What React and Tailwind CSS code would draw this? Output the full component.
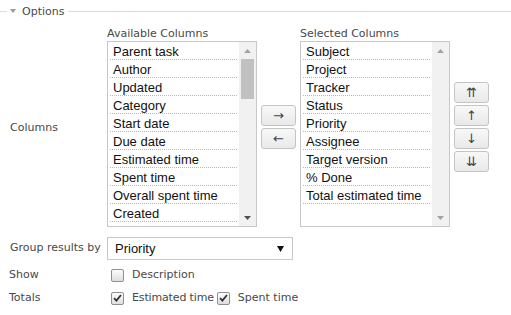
import React from "react";

const available = [
  "Parent task",
  "Author",
  "Updated",
  "Category",
  "Start date",
  "Due date",
  "Estimated time",
  "Spent time",
  "Overall spent time",
  "Created",
];
const selected = [
  "Subject",
  "Project",
  "Tracker",
  "Status",
  "Priority",
  "Assignee",
  "Target version",
  "% Done",
  "Total estimated time",
];

function Tri({ down, color }) {
  return (
    <svg width="7" height="4" viewBox="0 0 7 4">
      {down ? (
        <polygon points="0,0 7,0 3.5,4" fill={color} />
      ) : (
        <polygon points="0,4 7,4 3.5,0" fill={color} />
      )}
    </svg>
  );
}

function ListBox({ items, scroll }) {
  return (
    <div className="flex h-[186px] w-[150px] overflow-hidden border border-[#c8c8c8] bg-white">
      <div className="flex-1 overflow-hidden pl-[2px] pr-[2px]">
        {items.map((t) => (
          <div
            key={t}
            className="h-[18px] shrink-0 border-b border-dotted border-[#b8b8b8] pl-[3px] pt-[2px] text-[13px] leading-[15px] text-[#111] whitespace-nowrap"
            style={{ fontFamily: '"Liberation Sans", Arial, sans-serif' }}
          >
            {t}
          </div>
        ))}
      </div>
      <div className="flex w-[17px] flex-col bg-[#f1f1f1]">
        <div className="flex h-[17px] items-center justify-center">
          <Tri color="#a3a3a3" />
        </div>
        <div className="flex-1">
          {scroll && <div className="mx-[2px] h-[40px] bg-[#c1c1c1]" />}
        </div>
        <div className="flex h-[17px] items-center justify-center">
          <Tri down color={scroll ? "#505050" : "#a3a3a3"} />
        </div>
      </div>
    </div>
  );
}

function Btn({ children }) {
  return (
    <div className="flex h-[21px] w-[35px] items-center justify-center rounded-[3px] border border-[#c4c4c4] bg-gradient-to-b from-[#f8f8f8] to-[#e9e9e9] text-[13px] leading-none text-[#444]">
      {children}
    </div>
  );
}

function Check({ checked, ml = "ml-[4px]" }) {
  return (
    <div
      className={
        ml +
        " mr-[8px] flex h-[13px] w-[13px] shrink-0 items-center justify-center rounded-[2px] border border-[#8f8f8f] bg-gradient-to-b from-[#fcfcfc] to-[#dedede]"
      }
    >
      {checked && (
        <svg width="9" height="8" viewBox="0 0 9 8">
          <path d="M1 4.2 L3.4 6.6 L8 1" fill="none" stroke="#333" strokeWidth="1.8" />
        </svg>
      )}
    </div>
  );
}

export default function App() {
  return (
    <div
      className="flex h-[315px] w-[511px] flex-col overflow-hidden bg-white text-[11px] text-[#484848]"
      style={{ fontFamily: '"DejaVu Sans", Verdana, sans-serif' }}
    >
      {/* legend */}
      <div className="flex h-[22px] items-center">
        <div className="h-px w-[7px] bg-[#dcdcdc]" />
        <div className="ml-[3px] flex w-[6px] items-center">
          <svg width="6" height="4" viewBox="0 0 6 4">
            <polygon points="0,0 6,0 3,4" fill="#9a9a9a" />
          </svg>
        </div>
        <span className="ml-[6px] leading-none">Options</span>
        <div className="ml-[4px] h-px flex-1 bg-[#dcdcdc]" />
      </div>

      {/* columns */}
      <div className="mt-[5px] flex items-center">
        <div className="w-[107px] pl-[10px] pt-[3px]">Columns</div>
        <div className="flex items-center">
          <div className="flex flex-col">
            <div className="h-[14px] leading-[14px]">Available Columns</div>
            <ListBox items={available} scroll />
          </div>
          <div className="ml-[4px] flex flex-col gap-[2px]">
            <Btn>→</Btn>
            <Btn>←</Btn>
          </div>
          <div className="ml-[4px] flex flex-col">
            <div className="h-[14px] leading-[14px]">Selected Columns</div>
            <ListBox items={selected} />
          </div>
          <div className="ml-[4px] flex flex-col gap-[2px]">
            <Btn>⇈</Btn>
            <Btn>↑</Btn>
            <Btn>↓</Btn>
            <Btn>⇊</Btn>
          </div>
        </div>
      </div>

      {/* group */}
      <div className="mt-[10px] flex items-center">
        <div className="w-[107px] pl-[10px]">Group results by</div>
        <div
          className="flex h-[23px] w-[186px] items-center justify-between border border-[#c8c8c8] bg-white pl-[7px] pr-[8px] text-[13px] text-[#111]"
          style={{ fontFamily: '"Liberation Sans", Arial, sans-serif' }}
        >
          <span>Priority</span>
          <svg width="7" height="6" viewBox="0 0 7 6">
            <polygon points="0,0 7,0 3.5,6" fill="#111" />
          </svg>
        </div>
      </div>

      {/* show */}
      <div className="mt-[6px] flex h-[18px] items-center">
        <div className="w-[107px] pl-[9px]">Show</div>
        <Check />
        <span>Description</span>
      </div>

      {/* totals */}
      <div className="mt-[5px] flex h-[18px] items-center">
        <div className="w-[107px] pl-[9px]">Totals</div>
        <Check checked />
        <span className="tracking-[-0.15px]">Estimated time</span>
        <Check checked ml="ml-[3px]" />
        <span>Spent time</span>
      </div>
    </div>
  );
}
